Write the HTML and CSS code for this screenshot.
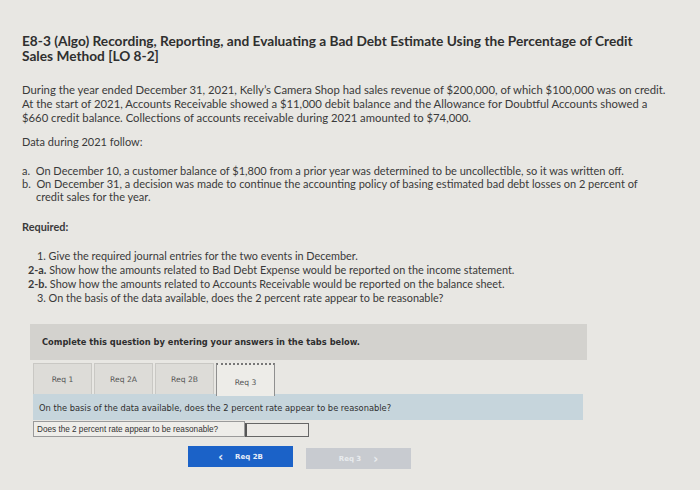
FILE: index.html
```html
<!DOCTYPE html>
<html>
<head>
<meta charset="utf-8">
<link rel="stylesheet" href="styles.css">
</head>
<body>
<div class="page">
  <h1 class="title">E8-3 (Algo) Recording, Reporting, and Evaluating a Bad Debt Estimate Using the Percentage of Credit Sales Method [LO 8-2]</h1>
  <p class="intro">During the year ended December 31, 2021, Kelly’s Camera Shop had sales revenue of $200,000, of which $100,000 was on credit. At the start of 2021, Accounts Receivable showed a $11,000 debit balance and the Allowance for Doubtful Accounts showed a $660 credit balance. Collections of accounts receivable during 2021 amounted to $74,000.</p>
  <p class="data">Data during 2021 follow:</p>
  <div class="events">
    <div class="event">a.&nbsp; On December 10, a customer balance of $1,800 from a prior year was determined to be uncollectible, so it was written off.</div>
    <div class="event">b.&nbsp; On December 31, a decision was made to continue the accounting policy of basing estimated bad debt losses on 2 percent of credit sales for the year.</div>
  </div>
  <p class="required">Required:</p>
  <div class="reqs">
    <div class="req req-num">1. Give the required journal entries for the two events in December.</div>
    <div class="req req-sub"><b>2-a.</b> Show how the amounts related to Bad Debt Expense would be reported on the income statement.</div>
    <div class="req req-sub"><b>2-b.</b> Show how the amounts related to Accounts Receivable would be reported on the balance sheet.</div>
    <div class="req req-num">3. On the basis of the data available, does the 2 percent rate appear to be reasonable?</div>
  </div>

  <div class="question">
    <div class="banner">Complete this question by entering your answers in the tabs below.</div>
    <div class="tabs">
      <div class="tab">Req 1</div>
      <div class="tab">Req 2A</div>
      <div class="tab">Req 2B</div>
      <div class="tab active">Req 3</div>
    </div>
    <div class="prompt">On the basis of the data available, does the 2 percent rate appear to be reasonable?</div>
    <div class="answer">
      <div class="answer-label">Does the 2 percent rate appear to be reasonable?</div>
      <div class="answer-input"></div>
    </div>
    <div class="nav">
      <div class="btn btn-prev"><span class="chev">&lsaquo;</span>Req 2B</div>
      <div class="btn btn-next">Req 3<span class="chev">&rsaquo;</span></div>
    </div>
  </div>
</div>
</body>
</html>
```
FILE: styles.css
```css
html, body {
  margin: 0;
  padding: 0;
}
body {
  width: 700px;
  height: 490px;
  overflow: hidden;
  background: #e8e7e3;
  color: #3a3a3a;
  font-family: Lato, "Liberation Sans", sans-serif;
}
.page {
  padding: 33px 0 0 22px;
}
.title {
  margin: 0;
  width: 632px;
  font-size: 13.7px;
  line-height: 15px;
  font-weight: 700;
  color: #2f2f2f;
}
.intro {
  margin: 20px 0 0;
  width: 648px;
  font-size: 11.3px;
  line-height: 14px;
}
.data {
  margin: 10px 0 0;
  font-size: 11px;
  line-height: 14px;
}
.events {
  margin-top: 15px;
  font-size: 11px;
  line-height: 13px;
}
.event {
  padding-left: 14px;
  text-indent: -14px;
  width: 625px;
}
.required {
  margin: 17px 0 0;
  font-size: 10.9px;
  line-height: 14px;
  font-weight: 700;
}
.reqs {
  margin-top: 15px;
  font-size: 10.85px;
  line-height: 14px;
}
.req-num {
  padding-left: 15px;
}
.req-sub {
  padding-left: 6px;
}
.question {
  margin-top: 19px;
  margin-left: 8px;
  font-family: "DejaVu Sans", sans-serif;
}
.banner {
  width: 545px;
  height: 36px;
  padding-left: 12px;
  background: #d3d2ce;
  font-size: 8.3px;
  font-weight: 700;
  color: #2e2e2e;
  display: flex;
  align-items: center;
}
.tabs {
  display: flex;
  gap: 2px;
  margin-top: 3px;
  margin-left: 3px;
}
.tab {
  width: 59px;
  height: 31px;
  box-sizing: border-box;
  background: #dddcd8;
  border: 1px solid #c9c8c4;
  border-bottom: none;
  display: flex;
  align-items: center;
  justify-content: center;
  font-size: 7.6px;
  color: #555;
}
.tab.active {
  background: #edece8;
  border: 1px solid #8f8f8f;
  border-top: 2px dotted #777;
  border-bottom: none;
  height: 33px;
  margin-bottom: -2px;
  position: relative;
  padding-top: 4px;
}
.prompt {
  margin-left: 3px;
  width: 544px;
  height: 24px;
  padding-left: 6px;
  box-sizing: content-box;
  background: #c6d5dc;
  font-size: 8.3px;
  color: #2f2f2f;
  display: flex;
  align-items: center;
  padding-top: 2px;
}
.answer {
  display: flex;
  margin-left: 3px;
  margin-top: 1px;
  height: 16px;
}
.answer-label {
  width: 212px;
  box-sizing: border-box;
  border: 1px solid #9a9a9a;
  background: #eeede9;
  padding-left: 3px;
  font-family: "Liberation Sans", Arial, sans-serif;
  font-size: 8.2px;
  color: #333;
  display: flex;
  align-items: center;
}
.answer-input {
  width: 64px;
  box-sizing: border-box;
  border: 1px solid #666;
  border-left: 2px solid #555;
  background: #eceae6;
  margin-top: 2px;
}
.nav {
  display: flex;
  gap: 13px;
  margin-top: 9px;
  margin-left: 158px;
}
.btn {
  width: 105px;
  height: 21px;
  display: flex;
  align-items: center;
  justify-content: center;
  font-size: 7px;
  font-weight: 700;
}
.btn-prev {
  background: #1b62c8;
  color: #e8eef8;
}
.btn-prev .chev {
  margin-right: 12px;
  font-size: 12px;
  font-weight: 700;
}
.btn-next {
  background: #c8cbd0;
  color: #e9ebee;
  margin-top: 2px;
}
.btn-next .chev {
  margin-left: 12px;
  font-size: 12px;
}
```
